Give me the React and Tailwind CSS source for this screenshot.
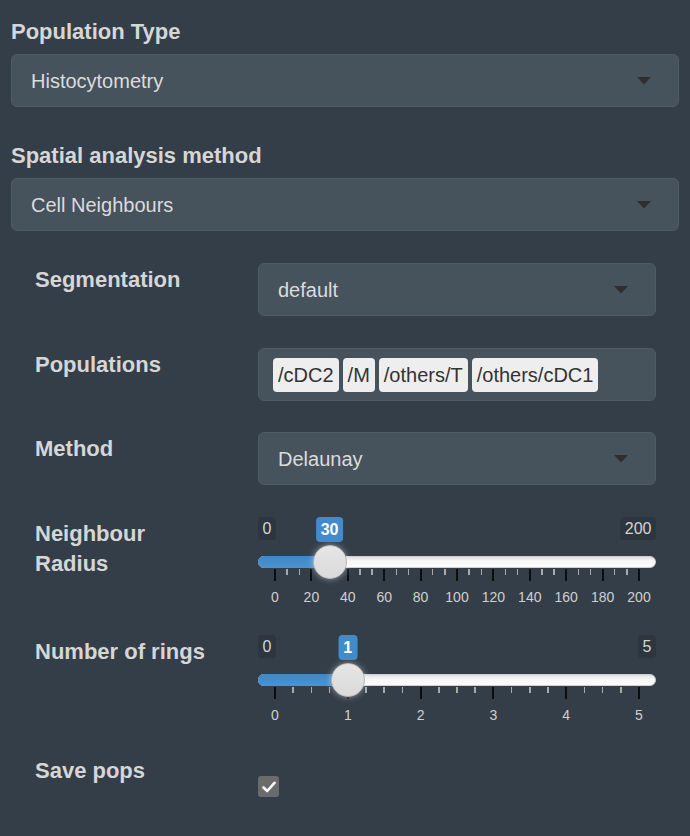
import React from "react";

const LABEL = "text-[22px] leading-[30px] font-bold text-[#d6d6d6] tracking-[0px]";

function Caret() {
  return (
    <svg width="14" height="8" viewBox="0 0 14 8" className="shrink-0">
      <polygon points="0,0 14,0 7,7.5" fill="#2e2e2e" />
    </svg>
  );
}

function Select({ value, className = "" }) {
  return (
    <div
      className={
        "h-[53px] rounded-[6px] border border-[#4f5b66] bg-[#46525c] flex items-center justify-between pl-[19px] pr-[27px] text-[20px] text-[#dcdcdc] " +
        className
      }
    >
      <span>{value}</span>
      <Caret />
    </div>
  );
}

function Row({ label, children, className = "" }) {
  return (
    <div className={"flex items-start " + className}>
      <div className={"w-[223px] shrink-0 pr-[40px] pt-[2px] " + LABEL}>{label}</div>
      <div className="flex-1 min-w-0">{children}</div>
    </div>
  );
}

function Slider({ min, max, value, step, minors }) {
  const x0 = 17;
  const span = 364;
  const pos = (v) => x0 + ((v - min) / (max - min)) * span;
  const hx = pos(value);
  const majors = [];
  for (let v = min; v <= max + 1e-9; v += step) majors.push(v);
  const minorTicks = [];
  for (let i = 0; i < majors.length - 1; i++) {
    for (let k = 1; k <= minors; k++) {
      minorTicks.push(majors[i] + (step * k) / (minors + 1));
    }
  }
  return (
    <div className="relative h-[88px] w-full">
      <div className="absolute left-0 top-0 h-[23px] px-[4.5px] rounded-[4px] bg-[#2d353f] text-[16px] leading-[23px] text-[#d4d4d4]">
        {min}
      </div>
      <div className="absolute right-0 top-0 h-[23px] px-[4.5px] rounded-[4px] bg-[#2d353f] text-[16px] leading-[23px] text-[#d4d4d4]">
        {max}
      </div>
      <div className="absolute top-[39px] left-0 right-0 h-[12px] rounded-full bg-[linear-gradient(to_bottom,#dedede,#f6f6f6_35%,#fdfdfd)] border border-[#d0d0d0]" />
      <div
        className="absolute top-[39px] left-0 h-[12px] rounded-l-full bg-[linear-gradient(to_bottom,#3f87c6,#4a92d0)]"
        style={{ width: hx }}
      />
      {minorTicks.map((v, i) => (
        <div
          key={"m" + i}
          className="absolute top-[52px] h-[6px] w-[1.5px] bg-[#a9a9a9]"
          style={{ left: pos(v) - 0.75 }}
        />
      ))}
      {majors.map((v, i) => (
        <div
          key={"M" + i}
          className="absolute top-[52px] h-[12px] w-[2px] bg-[#0d0d0d]"
          style={{ left: pos(v) - 1 }}
        />
      ))}
      {majors.map((v, i) => (
        <div
          key={"L" + i}
          className="absolute top-[72px] w-[40px] -ml-[20px] text-center text-[14px] leading-[16px] text-[#d0d0d0]"
          style={{ left: pos(v) }}
        >
          {v}
        </div>
      ))}
      <div
        className="absolute top-[28px] h-[34px] w-[34px] -ml-[17px] rounded-full border border-[#b9b9b9] bg-[linear-gradient(to_bottom,#e6e6e6,#dadada)] shadow-[0_0_6px_rgba(255,255,255,0.45)]"
        style={{ left: hx }}
      />
      <div
        className="absolute top-0 h-[25px] px-[5px] rounded-[4px] bg-[#428bca] text-white font-bold text-[16px] leading-[25px] -translate-x-1/2"
        style={{ left: hx }}
      >
        {value}
      </div>
    </div>
  );
}

function Tag({ children }) {
  return (
    <div className="h-[34px] px-[5px] rounded-[4px] bg-[#eeeeee] text-[20px] leading-[34px] text-[#333333]">
      {children}
    </div>
  );
}

export default function App() {
  return (
    <div className="min-h-[836px] w-full bg-[#343e48] font-['Liberation_Sans',Arial,sans-serif] px-[11px] pt-[17px]">
      <div className={LABEL}>Population Type</div>
      <Select className="mt-[7px]" value="Histocytometry" />
      <div className={LABEL + " mt-[34px]"}>Spatial analysis method</div>
      <Select className="mt-[7px]" value="Cell Neighbours" />
      <div className="pl-[24px] pr-[23px]">
        <Row label="Segmentation" className="mt-[32px]">
          <Select value="default" />
        </Row>
        <Row label="Populations" className="mt-[32px]">
          <div className="h-[53px] rounded-[6px] border border-[#4f5b66] bg-[#46525c] flex items-center gap-[4px] pl-[14px]">
            <Tag>/cDC2</Tag>
            <Tag>/M</Tag>
            <Tag>/others/T</Tag>
            <Tag>/others/cDC1</Tag>
          </div>
        </Row>
        <Row label="Method" className="mt-[31px]">
          <Select value="Delaunay" />
        </Row>
        <Row label="Neighbour Radius" className="mt-[32px]">
          <Slider min={0} max={200} value={30} step={20} minors={2} />
        </Row>
        <Row label="Number of rings" className="mt-[30px]">
          <Slider min={0} max={5} value={1} step={1} minors={3} />
        </Row>
        <Row label="Save pops" className="mt-[31px]">
          <div className="mt-[22px] h-[21px] w-[21px] rounded-[3px] bg-[#6b6b6b] flex items-center justify-center">
            <svg width="14" height="12" viewBox="0 0 14 12">
              <path d="M1.5 6.5 L5.2 10 L12.5 1.8" stroke="#ffffff" strokeWidth="2.6" fill="none" strokeLinecap="round" strokeLinejoin="round" />
            </svg>
          </div>
        </Row>
      </div>
    </div>
  );
}
